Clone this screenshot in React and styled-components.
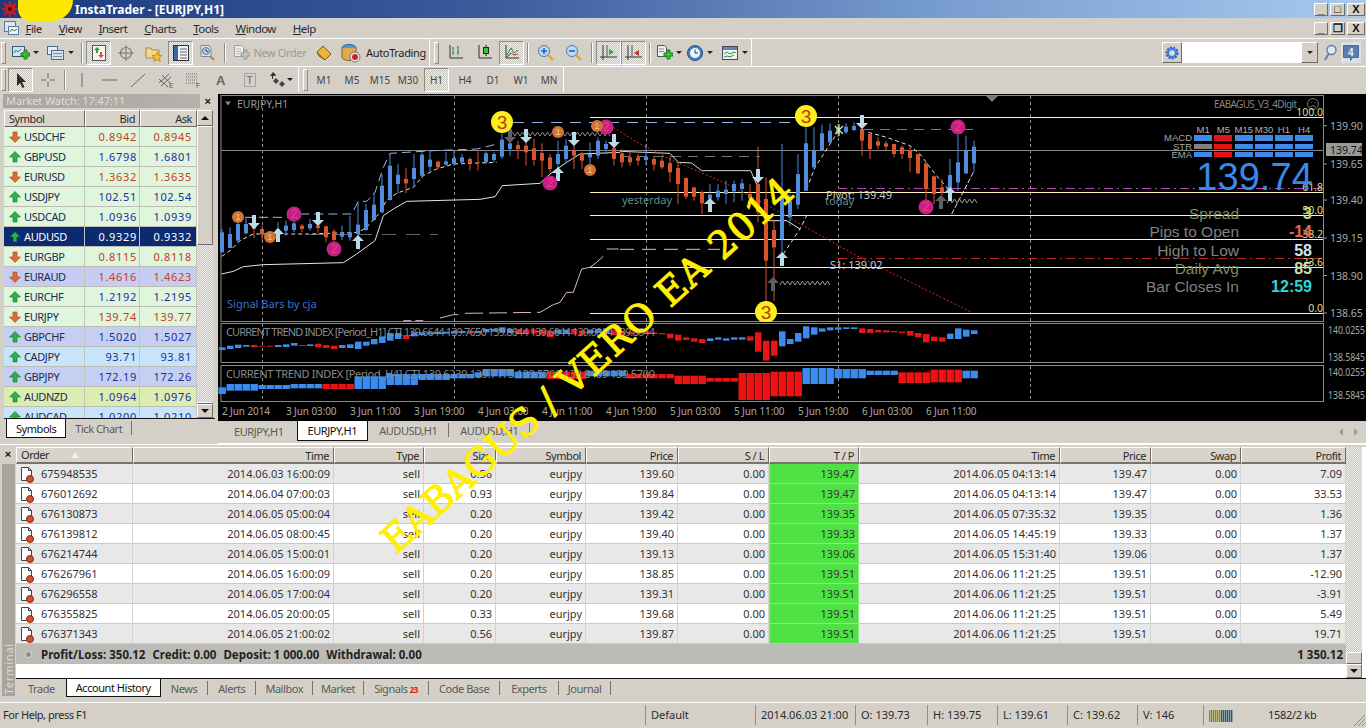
import React from 'react';
import styled, { createGlobalStyle, css } from 'styled-components';

const FACE = '#d4d0c8';
const UI_FONT = '"Noto Sans", "Liberation Sans", sans-serif';

const GlobalStyle = createGlobalStyle`
  html, body {
    margin: 0;
    padding: 0;
    background: ${FACE};
    overflow: hidden;
  }
`;

const dither = css`
  background: repeating-conic-gradient(#f4f2ee 0 25%, #c4c1b9 0 50%) 0 0 / 2px 2px;
`;

const raised = css`
  background: ${FACE};
  border: 1px solid;
  border-color: #fff #6e6b64 #6e6b64 #fff;
  box-sizing: border-box;
`;

// the original's labels are set in a narrower face than Noto
const tight = css`
  letter-spacing: -0.45px;
`;

const Page = styled.div`
  position: relative;
  width: 1366px;
  height: 728px;
  overflow: hidden;
  background: ${FACE};
  font-family: ${UI_FONT};
  font-size: 11px;
  color: #2a2a2a;
  display: flex;
  flex-direction: column;
`;

/* title + menu */
const TitleBar = styled.div`
  height: 18px;
  flex: none;
  display: flex;
  align-items: center;
  padding-left: 2px;
  background: linear-gradient(90deg, #1d3a80 0%, #3a5a9c 35%, #7a9fd0 70%, #a6caf0 100%);
`;

const TitleText = styled.span`
  margin-left: 57px;
  color: #fff;
  font-size: 12px;
  font-weight: 700;
`;

const Scribble = styled.div`
  position: absolute;
  left: 18px;
  top: 0;
  width: 55px;
  height: 21px;
  background: #ffe800;
  border-radius: 0 0 24px 14px;
  z-index: 3;
`;

const CaptionGroup = styled.div`
  margin-left: auto;
  display: flex;
  gap: 2px;
  padding-right: 1px;
`;

const CaptionBtn = styled.div`
  ${raised}
  width: ${(p) => p.$w || 14}px;
  height: 13px;
  display: flex;
  align-items: center;
  justify-content: center;
  font-family: "Liberation Sans", sans-serif;
  font-size: 11px;
  font-weight: 700;
  line-height: 1;
  color: #111;
`;

const MenuBar = styled.div`
  height: 20px;
  flex: none;
  display: flex;
  align-items: center;
  padding-left: 3px;
`;

const MenuItem = styled.span`
  padding: 0 8.5px;
  font-size: 11.5px;
  letter-spacing: -0.55px;
  &:first-of-type {
    margin-left: -2px;
  }
  u {
    text-underline-offset: 1px;
  }
`;

/* toolbars */
const ToolbarRow = styled.div`
  height: ${(p) => p.$h}px;
  flex: none;
  box-sizing: border-box;
  display: flex;
  align-items: center;
  border-top: 1px solid #fff;
  padding-left: 1px;
`;

const ToolGroup = styled.div`
  height: 100%;
  display: flex;
  align-items: center;
  border-right: 1px solid ${(p) => (p.$white ? '#fff' : '#8f8c85')};
  margin-right: 4px;
`;

const Gripper = styled.div`
  width: 3px;
  height: 20px;
  margin-right: 2px;
  border: 1px solid;
  border-color: #fff #8f8c85 #8f8c85 #fff;
`;

const ToolSep = styled.div`
  width: 1px;
  height: 20px;
  margin: 0 ${(p) => p.$m || 3}px;
  background: #8f8c85;
  border-right: 1px solid #fff;
`;

const ToolBtn = styled.div`
  width: ${(p) => p.$w}px;
  height: 24px;
  flex: none;
  box-sizing: border-box;
  display: flex;
  align-items: center;
  justify-content: center;
  gap: ${(p) => p.$gap || 3}px;
  ${(p) =>
    p.$on &&
    css`
      border: 1px solid;
      border-color: #8f8c85 #fff #fff #8f8c85;
      ${dither}
    `}
`;

const ToolLabel = styled.span`
  font-size: 11px;
  letter-spacing: -0.35px;
  color: ${(p) => (p.$off ? '#9c9a94' : '#222')};
`;

const PeriodBtn = styled(ToolBtn)`
  font-size: 10px;
  color: #444;
  width: 28px;
  ${(p) =>
    p.$on &&
    css`
      width: 25px;
      margin: 0 2px;
    `}
`;

const Caret = styled.span`
  width: 0;
  height: 0;
  border: 3px solid transparent;
  border-top: 3px solid #222;
  border-bottom: 0;
`;

const SearchArea = styled.div`
  margin-left: auto;
  padding-right: 4px;
  display: flex;
  align-items: center;
  height: 22px;
`;

const SearchGear = styled.div`
  ${raised}
  width: 20px;
  height: 21px;
  display: flex;
  align-items: center;
  justify-content: center;
`;

const SearchInput = styled.div`
  width: 119px;
  height: 21px;
  background: #fff;
`;

const SearchDrop = styled.div`
  ${raised}
  width: 17px;
  height: 21px;
  display: flex;
  align-items: center;
  justify-content: center;
  margin-right: 2px;
`;

const SearchBtn = styled.div`
  width: 20px;
  height: 21px;
  display: flex;
  align-items: center;
  justify-content: center;
  background: ${(p) => (p.$msg ? '#dfe0e4' : FACE)};
  margin-right: 1px;
`;

/* main area */
const MainRow = styled.div`
  height: 352px;
  flex: none;
  display: flex;
`;

const MarketWatch = styled.aside`
  width: 218px;
  flex: none;
  box-sizing: border-box;
  padding: 2px 0 0 3px;
  display: flex;
  flex-direction: column;
`;

const DockHead = styled.div`
  height: 14px;
  flex: none;
  display: flex;
  align-items: center;
  justify-content: space-between;
  margin-right: 3px;
`;

const DockTitle = styled.div`
  width: 197px;
  height: 14px;
  line-height: 14px;
  padding-left: 3px;
  box-sizing: border-box;
  font-size: 11px;
  letter-spacing: -0.1px;
  color: #e0ded8;
  background: linear-gradient(90deg, #a8a59e, #b5b2ab);
`;

const CloseMark = styled.span`
  font-family: "Liberation Sans", sans-serif;
  font-size: 11px;
  font-weight: 700;
  color: #111;
  padding-right: 4px;
`;

const WatchBody = styled.div`
  display: flex;
  margin: 2px 3px 0 1px;
  height: 308px;
  overflow: hidden;
  border-bottom: 1px solid #111;
`;

const WatchTable = styled.div`
  width: 193px;
  flex: none;
`;

const WatchRow = styled.div`
  display: grid;
  grid-template-columns: 81px 55px 57px;
  height: 20px;
  box-sizing: border-box;
  border-bottom: 1px solid #bdbdb6;
  background: ${(p) => p.$bg};
  color: ${(p) => (p.$sel ? '#fff' : '#1e2a50')};
`;

const WatchHead = styled.div`
  display: grid;
  grid-template-columns: 81px 55px 57px;
  height: 17px;
`;

const HeadCell = styled.div`
  ${raised}
  ${tight}
  background: #d8d4cc;
  padding: 0 4px;
  line-height: 15px;
  font-size: 11px;
  text-align: ${(p) => (p.$right ? 'right' : 'left')};
  white-space: nowrap;
  overflow: hidden;
`;

const SymbolCell = styled.div`
  display: flex;
  align-items: center;
  gap: 3px;
  padding-left: 5px;
  border-right: 1px solid #c4c4bc;
  font-size: 11px;
  letter-spacing: -0.4px;
`;

const QuoteCell = styled.div`
  line-height: 19px;
  padding-right: ${(p) => p.$pad}px;
  text-align: right;
  letter-spacing: 0.7px;
  border-right: 1px solid #c4c4bc;
  color: ${(p) => (p.$sel ? '#fff' : p.$down ? '#c2401f' : '#1c2f98')};
`;

const ScrollTrack = styled.div`
  width: 16px;
  flex: none;
  display: flex;
  flex-direction: column;
  ${dither}
`;

const ScrollBtn = styled.div`
  ${raised}
  height: ${(p) => p.$h || 16}px;
  flex: none;
  display: flex;
  align-items: center;
  justify-content: center;
`;

const Thumb = styled.div`
  ${raised}
  height: ${(p) => p.$h}px;
  flex: none;
  ${(p) =>
    p.$push &&
    css`
      margin-top: auto;
    `}
`;

const TriUp = styled.span`
  width: 0;
  height: 0;
  border: 4px solid transparent;
  border-bottom: 4px solid #111;
  border-top: 0;
`;

const TriDown = styled.span`
  width: 0;
  height: 0;
  border: 4px solid transparent;
  border-top: 4px solid #111;
  border-bottom: 0;
`;

const TabStrip = styled.div`
  display: flex;
  align-items: flex-start;
  flex: none;
  height: ${(p) => p.$h || 19}px;
  padding-left: ${(p) => p.$pad || 3}px;
`;

const Tab = styled.div`
  ${tight}
  height: 100%;
  box-sizing: border-box;
  padding: 0 ${(p) => p.$px || 10}px;
  display: flex;
  align-items: center;
  gap: 2px;
  white-space: nowrap;
  font-size: 11px;
  color: #5c5a55;
  border-right: 1px solid #77746d;
  ${(p) =>
    p.$plain &&
    css`
      border-right: 0;
    `}
  ${(p) =>
    p.$active &&
    css`
      background: #fff;
      color: #111;
      border: 1px solid #111;
      border-top: 0;
    `}
  ${(p) =>
    p.$thin &&
    css`
      height: 14px;
      margin-top: 2px;
    `}
`;

const TabBadge = styled.span`
  color: #e81818;
  font-size: 8px;
  font-weight: 700;
  align-self: flex-end;
  margin-bottom: 0;
`;

/* chart column */
const ChartColumn = styled.section`
  flex: 1;
  min-width: 0;
  padding-top: 2px;
  display: flex;
  flex-direction: column;
`;

const ChartWindow = styled.div`
  background: #000;
  height: 327px;
  flex: none;
  display: flex;
  flex-direction: column;
`;

const Pane = styled.div`
  position: relative;
  height: ${(p) => p.$h}px;
  flex: none;
  svg {
    display: block;
  }
`;

const TimeAxis = styled.div`
  display: flex;
  height: 18px;
  padding-left: 4px;
`;

const TimeLabel = styled.span`
  width: 64px;
  flex: none;
  font-size: 10px;
  letter-spacing: -0.1px;
  line-height: 17px;
  white-space: nowrap;
  color: #a8a8a8;
`;

const ChartTabs = styled.div`
  height: 22px;
  flex: none;
  display: flex;
  align-items: flex-start;
  position: relative;
  border-bottom: 1px solid #fff;
`;

const TabArrows = styled.div`
  margin-left: auto;
  margin-right: 8px;
  display: flex;
  gap: 11px;
  height: 100%;
  align-items: center;
`;

const TinyTri = styled.span`
  width: 0;
  height: 0;
  border: 4px solid transparent;
  ${(p) => (p.$left ? 'border-right: 4px solid #a3a09a; border-left: 0;' : 'border-left: 4px solid #a3a09a; border-right: 0;')}
`;

/* info panel over the chart */
const InfoPanel = styled.div`
  position: absolute;
  left: 920px;
  top: 32px;
  width: 175px;
  font-family: "Liberation Sans", sans-serif;
`;

const SignalGrid = styled.div`
  display: grid;
  grid-template-columns: 54px repeat(6, 18px);
  column-gap: 2.2px;
  grid-auto-rows: 8.3px;
  font-size: 9.5px;
  line-height: 8px;
  color: #b0b0b0;
  text-align: center;
`;

const SignalName = styled.div`
  text-align: right;
  color: #a8a8a8;
`;

const SignalCell = styled.div`
  height: 5.5px;
  margin-top: 1px;
  background: ${(p) => p.$c};
`;

const BigPrice = styled.div`
  font-size: 38px;
  line-height: 42px;
  margin-top: -3px;
  text-align: right;
  color: #3a88e8;
  letter-spacing: 0.1px;
`;

const Stats = styled.div`
  display: grid;
  grid-template-columns: 101px 74px;
  grid-auto-rows: 18.2px;
  margin-top: 7px;
  font-size: 15.5px;
  line-height: 18px;
  text-align: right;
`;

const StatLabel = styled.div`
  color: ${(p) => p.$c || '#808080'};
  white-space: nowrap;
`;

const StatValue = styled.div`
  font-weight: 700;
  font-size: 16px;
  color: ${(p) => p.$c};
  padding-right: 1px;
`;

/* terminal */
const Terminal = styled.section`
  height: 257px;
  flex: none;
  box-sizing: border-box;
  padding-top: 2px;
  display: flex;
  border-top: 1px solid #fff;
`;

const TerminalSide = styled.div`
  width: 16px;
  flex: none;
  display: flex;
  flex-direction: column;
  align-items: center;
`;

const SideClose = styled(CloseMark)`
  padding: 0;
  line-height: 15px;
`;

const SideBar = styled.div`
  flex: 1;
  width: 13px;
  margin: 2px 0 5px;
  background: #a8a59e;
  display: flex;
  align-items: flex-end;
  justify-content: center;
`;

const SideLabel = styled.span`
  writing-mode: vertical-rl;
  transform: rotate(180deg);
  font-size: 11px;
  letter-spacing: 0.8px;
  color: #dcd9d2;
  padding-top: 2px;
`;

const TerminalMain = styled.div`
  flex: 1;
  min-width: 0;
  display: flex;
  flex-direction: column;
`;

const TradeArea = styled.div`
  height: 231px;
  flex: none;
  display: flex;
  background: #fff;
  border-bottom: 1px solid #111;
`;

const TradeTable = styled.div`
  width: 1330px;
  flex: none;
`;

const COLUMNS = '117px 201px 90px 72px 90px 92px 91px 90px 201px 91px 90px 105px';

const TradeHead = styled.div`
  display: grid;
  grid-template-columns: ${COLUMNS};
  height: 17px;
`;

const TradeHeadCell = styled(HeadCell)`
  border-bottom: 2px solid #77746d;
  line-height: 16px;
  ${(p) =>
    p.$sort &&
    css`
      display: flex;
      gap: 22px;
      align-items: center;
    `}
`;

const SortMark = styled.span`
  width: 0;
  height: 0;
  border: 4px solid transparent;
  border-bottom: 6px solid #f2f0ea;
  border-top: 0;
`;

const TradeRow = styled.div`
  display: grid;
  grid-template-columns: ${COLUMNS};
  height: 20px;
  box-sizing: border-box;
  background: ${(p) => (p.$odd ? '#e8e8e8' : '#fff')};
  border-bottom: 1px solid #c9c9c9;
`;

const TradeCell = styled.div`
  line-height: 20px;
  padding-right: 3px;
  text-align: right;
  color: #333;
  border-right: 1px solid #d2d2d2;
  ${(p) =>
    p.$tp &&
    css`
      background: #4fe244;
      border: 1px solid #8ee888;
      border-top: 0;
      line-height: 19px;
    `}
`;

const OrderCell = styled.div`
  display: flex;
  align-items: center;
  gap: 5px;
  padding-left: 3px;
  line-height: 20px;
  color: #333;
  border-right: 1px solid #d2d2d2;
`;

const TotalRow = styled.div`
  height: 20px;
  display: flex;
  align-items: center;
  padding: 0 3px 0 9px;
  background: #bdbbb6;
  font-size: 11.5px;
  font-weight: 700;
  color: #222;
`;

const TotalDot = styled.span`
  width: 5px;
  height: 5px;
  border-radius: 50%;
  background: #8c8a85;
  border: 1px solid #e4e2dc;
  margin-right: 9px;
`;

const TotalSum = styled.span`
  margin-left: auto;
`;

const TotalPart = styled.span`
  margin-right: 7px;
`;

/* status bar */
const StatusBar = styled.footer`
  height: 25px;
  flex: none;
  box-sizing: border-box;
  border-top: 1px solid #fff;
  display: flex;
  align-items: center;
  position: relative;
  margin-top: 1px;
`;

const StatusCell = styled.div`
  width: ${(p) => p.$w}px;
  flex: none;
  box-sizing: border-box;
  height: 20px;
  line-height: 20px;
  padding-left: ${(p) => p.$pad || 5}px;
  white-space: nowrap;
  border-right: 1px solid #8f8c85;
  ${(p) =>
    p.$hint &&
    css`
      padding-left: 3px;
      ${tight}
    `}
  ${(p) =>
    p.$last &&
    css`
      border-right: 0;
    `}
`;

const ConnBars = styled.svg`
  vertical-align: middle;
`;

const TrafficLabel = styled.span`
  margin-left: 35px;
  letter-spacing: -0.3px;
`;

const Grip = styled.svg`
  position: absolute;
  right: 0;
  bottom: 0;
`;

/* watermark written across the screenshot */
const Watermark = styled.div`
  position: absolute;
  left: 588px;
  top: 365px;
  transform: translate(-50%, -50%) rotate(-42deg);
  font-family: "DejaVu Serif", "Liberation Serif", serif;
  font-size: 38px;
  line-height: 1;
  letter-spacing: 1px;
  white-space: pre;
  color: #ffef00;
  -webkit-text-stroke: 1px #ffef00;
  z-index: 4;
  pointer-events: none;
`;

const WatermarkWord = styled.span`
  letter-spacing: -0.3px;
`;

/* ---- data ---- */

const WATCH = [
  ['USDCHF', '0.8942', '0.8945', 1, '#dff5dc'],
  ['GBPUSD', '1.6798', '1.6801', 0, '#dff5dc'],
  ['EURUSD', '1.3632', '1.3635', 1, '#dff5dc'],
  ['USDJPY', '102.51', '102.54', 0, '#dff5dc'],
  ['USDCAD', '1.0936', '1.0939', 0, '#dff5dc'],
  ['AUDUSD', '0.9329', '0.9332', 0, '#0c2a70', true],
  ['EURGBP', '0.8115', '0.8118', 1, '#dff5dc'],
  ['EURAUD', '1.4616', '1.4623', 1, '#c5cdf2'],
  ['EURCHF', '1.2192', '1.2195', 0, '#dff5dc'],
  ['EURJPY', '139.74', '139.77', 1, '#dff5dc'],
  ['GBPCHF', '1.5020', '1.5027', 0, '#c5cff2'],
  ['CADJPY', '93.71', '93.81', 0, '#c8e4fb'],
  ['GBPJPY', '172.19', '172.26', 0, '#c5cff2'],
  ['AUDNZD', '1.0964', '1.0976', 0, '#dcedb2'],
  ['AUDCAD', '1.0200', '1.0210', 0, '#c8e4fb'],
];

const TRADES = [
  ['675948535', '2014.06.03 16:00:09', '0.56', '139.60', '139.47', '2014.06.05 04:13:14', '7.09'],
  ['676012692', '2014.06.04 07:00:03', '0.93', '139.84', '139.47', '2014.06.05 04:13:14', '33.53'],
  ['676130873', '2014.06.05 05:00:04', '0.20', '139.42', '139.35', '2014.06.05 07:35:32', '1.36'],
  ['676139812', '2014.06.05 08:00:45', '0.20', '139.40', '139.33', '2014.06.05 14:45:19', '1.37'],
  ['676214744', '2014.06.05 15:00:01', '0.20', '139.13', '139.06', '2014.06.05 15:31:40', '1.37'],
  ['676267961', '2014.06.05 16:00:09', '0.20', '138.85', '139.51', '2014.06.06 11:21:25', '-12.90'],
  ['676296558', '2014.06.05 17:00:04', '0.20', '139.31', '139.51', '2014.06.06 11:21:25', '-3.91'],
  ['676355825', '2014.06.05 20:00:05', '0.33', '139.68', '139.51', '2014.06.06 11:21:25', '5.49'],
  ['676371343', '2014.06.05 21:00:02', '0.56', '139.87', '139.51', '2014.06.06 11:21:25', '19.71'],
];

const TIMES = [
  '2 Jun 2014', '3 Jun 03:00', '3 Jun 11:00', '3 Jun 19:00', '4 Jun 03:00', '4 Jun 11:00',
  '4 Jun 19:00', '5 Jun 03:00', '5 Jun 11:00', '5 Jun 19:00', '6 Jun 03:00', '6 Jun 11:00',
];

// high, body top, body bottom, low, colour - read off the picture at 3x
const CANDLES = [
  [405,415,475,475,'b'],[400,420,462,462,'b'],[375,390,440,445,'b'],[370,390,418,420,'b'],[375,395,405,432,'r'],
  [395,405,420,440,'r'],[420,422,435,445,'r'],[385,405,432,440,'b'],[380,395,410,425,'b'],[370,388,408,415,'b'],
  [390,395,405,415,'r'],[375,390,403,410,'b'],[380,395,402,418,'r'],[395,397,430,445,'r'],[405,412,438,450,'r'],
  [395,417,428,438,'b'],[365,415,430,440,'b'],[322,392,420,440,'b'],[330,348,408,410,'b'],[295,332,378,380,'b'],
  [240,275,355,358,'b'],[178,215,318,320,'b'],[210,242,270,298,'b'],[222,255,268,298,'r'],[180,222,255,280,'b'],
  [175,182,245,252,'b'],[168,197,218,232,'b'],[200,203,220,225,'r'],[175,202,212,215,'b'],[170,192,210,215,'b'],
  [180,190,205,210,'b'],[190,195,208,230,'r'],[172,205,207,230,'r'],[172,178,205,210,'b'],[175,180,198,205,'b'],
  [118,137,188,195,'b'],[118,148,165,185,'b'],[140,153,165,195,'r'],[135,155,175,215,'r'],[135,163,198,215,'r'],
  [148,177,200,250,'r'],[180,190,225,235,'r'],[140,180,210,235,'b'],[135,155,195,210,'b'],[150,170,185,225,'r'],
  [175,177,200,225,'r'],[145,180,190,215,'b'],[130,140,185,195,'b'],[140,150,165,180,'b'],[150,163,195,215,'r'],
  [165,178,205,220,'r'],[175,190,205,215,'r'],[180,190,200,215,'r'],[150,188,198,215,'b'],[185,195,212,230,'r'],
  [190,200,220,225,'r'],[185,207,235,265,'r'],[205,222,270,330,'r'],[250,252,308,315,'r'],[280,280,308,320,'r'],
  [290,295,328,360,'r'],[270,302,314,345,'b'],[270,290,310,320,'b'],[260,287,300,330,'b'],[260,270,292,325,'b'],
  [255,268,285,320,'b'],[270,300,312,340,'r'],[158,270,355,385,'r'],[250,315,500,620,'r'],[380,408,460,620,'r'],
  [150,305,435,480,'b'],[300,320,370,395,'b'],[180,240,332,345,'b'],[100,148,290,290,'b'],[100,170,220,225,'b'],
  [92,118,168,170,'b'],[88,110,145,150,'b'],[90,100,120,130,'b'],[88,98,115,120,'b'],[85,96,108,112,'b'],
  [100,105,140,185,'r'],[120,120,165,195,'r'],[130,142,155,165,'r'],[140,148,158,168,'r'],[150,150,180,190,'r'],
  [155,160,180,195,'r'],[155,168,192,235,'r'],[180,180,238,240,'r'],[205,208,285,320,'r'],[245,247,300,330,'r'],
  [255,280,295,305,'r'],[195,243,285,295,'b'],[100,205,265,290,'b'],[125,170,238,240,'b'],[140,158,208,235,'b'],
];

const CTI_H1 = [
  [85,93,'b'],[80,90,'b'],[77,87,'b'],[78,83,'b'],[78,85,'r'],[80,83,'r'],[80,83,'r'],[78,84,'b'],[76,84,'b'],[72,80,'b'],
  [78,81,'r'],[76,81,'b'],[74,85,'r'],[78,87,'r'],[80,90,'r'],[78,87,'b'],[76,87,'b'],[68,90,'b'],[68,80,'b'],[60,76,'b'],
  [52,72,'b'],[42,65,'b'],[42,60,'b'],[48,60,'r'],[40,52,'b'],[40,48,'b'],[40,46,'b'],[38,44,'b'],[38,44,'b'],[36,44,'b'],
  [36,42,'b'],[36,44,'r'],[36,42,'b'],[30,40,'b'],[30,38,'b'],[25,40,'b'],[30,42,'b'],[30,44,'r'],[32,44,'r'],[32,44,'r'],
  [32,48,'r'],[35,55,'r'],[32,44,'b'],[32,44,'b'],[30,46,'r'],[35,48,'r'],[32,44,'b'],[30,42,'b'],[28,44,'b'],[32,48,'r'],
  [36,48,'r'],[38,46,'r'],[38,44,'r'],[38,44,'r'],[40,45,'r'],[42,46,'r'],[44,58,'r'],[47,65,'r'],[55,63,'r'],[58,68,'r'],
  [60,72,'r'],[58,66,'b'],[55,62,'b'],[58,65,'b'],[55,62,'b'],[55,62,'b'],[52,65,'r'],[40,98,'r'],[65,125,'r'],[65,110,'r'],
  [37,82,'b'],[60,75,'b'],[42,68,'b'],[22,58,'b'],[25,47,'b'],[28,38,'b'],[25,34,'b'],[25,32,'b'],[25,30,'b'],[25,30,'b'],
  [28,42,'r'],[30,42,'r'],[33,40,'r'],[34,40,'r'],[36,40,'r'],[38,42,'r'],[36,50,'r'],[42,55,'r'],[45,70,'r'],[53,66,'r'],
  [55,68,'r'],[44,60,'b'],[28,60,'b'],[32,53,'b'],[34,45,'b'],
];

// from, to, top, bottom, colour
const CTI_H4 = [
  [0,0,205,225,'b'],[1,4,195,215,'b'],[5,8,198,210,'b'],[9,12,195,208,'b'],[13,16,195,210,'r'],[17,20,172,210,'b'],
  [21,24,165,198,'b'],[25,28,165,183,'b'],[29,31,165,178,'b'],[32,32,160,175,'b'],[33,36,150,172,'b'],[37,40,158,178,'b'],
  [41,45,158,180,'r'],[46,50,155,172,'b'],[51,56,165,178,'r'],[57,60,170,195,'r'],[61,64,177,188,'r'],[65,68,162,243,'r'],
  [69,72,158,232,'r'],[73,76,147,195,'b'],[77,80,150,178,'b'],[81,84,155,168,'b'],[85,88,160,192,'r'],[89,92,152,190,'r'],
  [93,94,155,178,'b'],
];

const BLUE = '#4f8cdc';
const RED = '#d9552c';
const HIST = { b: '#3a8cf0', r: '#ee1212' };

const cx = (i) => 222 + 8 * i;
const zy = (z) => 95 + z / 3;
const subY = (z) => 320 + z / 3;

// polylines noted in crop coordinates, ox is the crop's left edge
const pts = (ox, list) => list.map(([x, y]) => `${ox + x / 3},${zy(y)}`).join(' ');

const FIBO = [118.5, 193.5, 216.5, 240.5, 268.5, 314.5];
const FIBO_LABELS = [['100.0', 113], ['61.8', 188], ['50.0', 211], ['38.2', 235], ['23.6', 263], ['0.0', 309]];
const GRID_X = [262, 454, 646, 838, 1030];
const PRICES = [['139.90', 126.7], ['139.65', 165], ['139.40', 201], ['139.15', 239], ['138.90', 276.5], ['138.65', 314]];

const ARROWS = [
  [254, 223, 1], [318, 220, 1], [526, 137, 1], [574, 140, 1], [614, 142, 1], [510, 137, 1, 1],
  [758, 177, 1], [862, 123, 1],
  [278, 236, 0], [358, 243, 0], [558, 175, 0], [710, 206, 0], [782, 260, 0], [950, 195, 0],
  [773, 285, 0, 1], [941, 203, 0, 1],
];

const BADGES = [
  [502, 123, 3], [806, 117, 3], [766, 313, 3],
  [294, 215, 2], [334, 250, 2], [550, 184, 2], [606, 128, 2], [958, 128, 2], [926, 208, 2],
  [238, 218, 1], [270, 238, 1], [558, 133, 1], [590, 171, 1], [597, 127, 1],
];

const zigzag = (x, y, n) => {
  let d = `M${x} ${y}`;
  for (let i = 0; i < n; i++) d += ` l2.5 -4 l2.5 4`;
  return d;
};

const Arrow = ({ x, y, down, dim }) => {
  const s = down ? -1 : 1;
  const d = `M${x} ${y - 7 * s} L${x + 6} ${y - s} L${x + 2} ${y - s} L${x + 2} ${y + 7 * s} L${x - 2} ${y + 7 * s} L${x - 2} ${y - s} L${x - 6} ${y - s} Z`;
  return <path d={d} fill={dim ? '#5c6060' : '#b9dce8'} />;
};

const Badge = ({ x, y, n }) => {
  const look = {
    3: { r: 11, fill: '#ffee1e', ink: '#b2400f', size: 19 },
    2: { r: 7.5, fill: '#c4208c', ink: '#f0406a', size: 12 },
    1: { r: 6, fill: '#cf7436', ink: '#f3c59a', size: 9 },
  }[n];
  return (
    <g>
      <circle cx={x} cy={y} r={look.r} fill={look.fill} />
      <text x={x} y={y + look.size * 0.36} textAnchor="middle" fontSize={look.size} fontFamily="Liberation Sans, sans-serif" fill={look.ink}>
        {n}
      </text>
    </g>
  );
};

const FONT = 'Noto Sans, sans-serif';

const MainChart = () => (
  <svg width="1148" height="228" viewBox="218 95 1148 228">
    <rect x="221" y="96.5" width="1102.5" height="226" fill="none" stroke="#8a8a8a" />
    {GRID_X.map((x) => (
      <line key={x} x1={x + 0.5} x2={x + 0.5} y1="97" y2="322" stroke="#8f8f8f" strokeDasharray="3 3" />
    ))}
    <line x1="221" x2="1323" y1="151.5" y2="151.5" stroke="#8a8a8a" />
    {FIBO.map((y) => (
      <line key={y} x1="590" x2="1323" y1={y} y2={y} stroke="#fff3b4" />
    ))}
    <line x1="838" x2="1323" y1="189.5" y2="189.5" stroke="#c23cc2" strokeDasharray="9 4 2 4" />
    <line x1="838" x2="1323" y1="259.5" y2="259.5" stroke="#c42424" strokeDasharray="9 4 2 4" />
    <line x1="513" x2="793" y1="123.5" y2="123.5" stroke="#8fb4e0" strokeDasharray="11 8" />
    <line x1="863" x2="973" y1="130.5" y2="130.5" stroke="#777" strokeDasharray="10 7" />
    <line x1="620" x2="760" y1="157.5" y2="157.5" stroke="#777" strokeDasharray="10 7" />
    <line x1="310" x2="438" y1="235.5" y2="235.5" stroke="#666" strokeDasharray="14 10" />

    <polyline
      fill="none"
      stroke="#e4e4e4"
      points={pts(220, [[5,540],[40,532],[70,518],[130,512],[370,506],[410,480],[465,440],[490,365],[520,345],[560,322],[780,316],[825,308],[847,275],[960,268],[990,240],[1040,205],[1080,180],[1200,175]])}
    />
    <polyline
      fill="none"
      stroke="#d8d8d8"
      points={pts(620, [[0,172],[150,178],[175,205],[215,207],[245,230],[392,230],[412,275]])}
    />
    <polyline
      fill="none"
      stroke="#9db8dd"
      strokeDasharray="9 5"
      points={pts(220, [[75,370],[125,370],[148,370],[215,370],[240,360],[395,360],[415,322],[440,322],[465,295],[490,220],[510,178],[640,170],[770,165],[800,158],[830,150]])}
    />
    <polyline
      fill="none"
      stroke="#e0e0e0"
      strokeDasharray="4 3"
      points={pts(220, [[5,487],[30,470],[60,440],[100,420],[200,420],[270,420],[415,415],[440,400],[480,355],[500,318],[530,298],[580,280],[610,245],[650,225],[700,210],[830,205]])}
    />
    <polyline fill="none" stroke="#e0e0e0" strokeDasharray="4 3" points={pts(620, [[745,115],[800,130],[870,155],[900,180],[945,240],[985,285]])} />
    <polyline fill="none" stroke="#e0e0e0" strokeDasharray="4 3" points={pts(620, [[560,285],[585,220],[640,135],[655,110]])} />
    <polyline fill="none" stroke="#e0e0e0" strokeDasharray="4 3" points={pts(620, [[490,480],[540,405],[560,365]])} />
    <polyline fill="none" stroke="#e0e0e0" points={pts(620, [[440,380],[500,380],[540,405]])} />
    <polyline fill="none" stroke="#e0e0e0" strokeDasharray="5 2" points={pts(620, [[995,360],[1060,235]])} />
    <polyline fill="none" stroke="#d8b8d0" points={pts(220, [[550,680],[610,680]])} strokeDasharray="8 4" />
    <polyline fill="none" stroke="#d8b8d0" points={pts(220, [[660,672],[700,662],[715,662]])} />
    <polyline fill="none" stroke="#d8b8d0" strokeDasharray="18 6" points={pts(220, [[735,658],[960,655]])} />
    <polyline fill="none" stroke="#d8b8d0" points={pts(220, [[960,655],[1000,632],[1020,625],[1040,595],[1060,595],[1085,525],[1110,520],[1130,505],[1150,487]])} />
    <polyline fill="none" stroke="#d8b8d0" strokeDasharray="12 6" points={pts(220, [[1160,465],[1200,465]])} />
    <polyline fill="none" stroke="#d8b8d0" strokeDasharray="14 8" points={pts(620, [[0,466],[300,466]])} />
    <polyline fill="none" stroke="#d03020" strokeDasharray="2 2" points={pts(620, [[-20,100],[60,150],[160,200],[300,260],[400,310],[700,480],[1055,655]])} />

    {CANDLES.map(([hi, top, bot, lo, c], i) => (
      <g key={i} fill={c === 'b' ? BLUE : RED}>
        <rect x={cx(i) - 0.5} y={zy(hi)} width="1" height={(lo - hi) / 3} />
        <rect x={cx(i) - 2} y={zy(top)} width="4" height={(bot - top) / 3} />
      </g>
    ))}

    <path d={zigzag(510, 137, 20)} fill="none" stroke="#8a8a8a" />
    <path d={zigzag(780, 286, 10)} fill="none" stroke="#9a9a9a" />
    <path d={zigzag(947, 204, 6)} fill="none" stroke="#9a9a9a" />
    <path d="M835 127l8 8M843 127l-8 8M839 125v12" stroke="#d8e8a0" strokeWidth="1.2" />

    {ARROWS.map(([x, y, down, dim], i) => (
      <Arrow key={i} x={x} y={y} down={down} dim={dim} />
    ))}
    {BADGES.map(([x, y, n], i) => (
      <Badge key={i} x={x} y={y} n={n} />
    ))}

    <path d="M225 102.5h6l-3 4z" fill="#8a8a8a" />
    <text x="237" y="108.5" fontFamily={FONT} fontSize="10.5" fill="#999">EURJPY,H1</text>
    <text x="227" y="309" fontFamily={FONT} fontSize="11" fill="#3f6fd4">Signal Bars by cja</text>
    <text x="622" y="205" fontFamily={FONT} fontSize="11" fill="#5f8f8f">yesterday</text>
    <text x="825" y="206" fontFamily={FONT} fontSize="11" fill="#5f8f8f">today</text>
    <text x="826" y="200" fontFamily={FONT} fontSize="11" fill="#c8c8c8">Pivot: 139.49</text>
    <text x="830" y="270" fontFamily={FONT} fontSize="11" fill="#c8c8c8">S1: 139.02</text>
    <path d="M986 97h12l-6 6z" fill="#777" />
    <text x="1214" y="109" fontFamily={FONT} fontSize="10" fill="#858585" textLength="83">EABAGUS_V3_4Digit</text>
    <circle cx="1313" cy="105" r="5.5" fill="none" stroke="#777" />
    <path d="M1310.5 103.5h1M1314.5 103.5h1M1310 108q3 -3 6 0" stroke="#777" fill="none" />
    {FIBO_LABELS.map(([t, y]) => (
      <text key={t} x="1323" y={y + 4} textAnchor="end" fontFamily={FONT} fontSize="10.5" fill="#dede90">{t}</text>
    ))}
    {PRICES.map(([t, y]) => (
      <g key={t}>
        <line x1="1324" x2="1327" y1={y} y2={y} stroke="#999" />
        <text x="1330" y={y + 4} fontFamily={FONT} fontSize="10.5" fill="#a8a8a8">{t}</text>
      </g>
    ))}
    <rect x="1326" y="144" width="36" height="13" fill="#9a9a9a" />
    <text x="1330" y="154.5" fontFamily={FONT} fontSize="10.5" fill="#111">139.74</text>
  </svg>
);

const SubChart = ({ height, top, title, titleWidth, children, high, low }) => (
  <svg width="1148" height={height} viewBox={`218 ${top} 1148 ${height}`}>
    <rect x="221" y={top + 1.5} width="1102.5" height={height - 3} fill="none" stroke="#8a8a8a" />
    {GRID_X.map((x) => (
      <line key={x} x1={x + 0.5} x2={x + 0.5} y1={top + 2} y2={top + height - 2} stroke="#8f8f8f" strokeDasharray="3 3" />
    ))}
    {children}
    <text x="226" y={top + 14} fontFamily={FONT} fontSize="11" fill="#8a8a8a" textLength={titleWidth}>{title}</text>
    <text x="1328" y={high} fontFamily={FONT} fontSize="10.5" fill="#a8a8a8" textLength="37" lengthAdjust="spacingAndGlyphs">140.0255</text>
    <text x="1328" y={low} fontFamily={FONT} fontSize="10.5" fill="#a8a8a8" textLength="37" lengthAdjust="spacingAndGlyphs">138.5845</text>
  </svg>
);

/* ---- icons ---- */
const Ico = ({ children, w = 18, h = 18 }) => (
  <svg width={w} height={h} viewBox={`0 0 ${w} ${h}`}>{children}</svg>
);

const PLUS = 'M9 9h3V6h3v3h3v3h-3v3h-3v-3H9z';

const IcNewChart = () => (
  <Ico>
    <rect x="0.5" y="2.5" width="12" height="10" fill="#cfe2f6" stroke="#3a5a78" />
    <path d="M2 9l2-3 2 2 3-3" stroke="#2a8a3a" fill="none" />
    <path d={PLUS} fill="#36c336" stroke="#1a7a1a" />
  </Ico>
);
const IcProfiles = () => (
  <Ico>
    <rect x="0.5" y="2.5" width="10" height="8" fill="#e6eef8" stroke="#4a6a90" />
    <rect x="4.5" y="6.5" width="12" height="9" fill="#d4e2f2" stroke="#4a6a90" />
    <path d="M6 9.5h9M6 12.5h9" stroke="#7a90aa" />
  </Ico>
);
const IcMarket = () => (
  <Ico>
    <rect x="2.5" y="1.5" width="13" height="15" fill="#f4f4f0" stroke="#555" />
    <path d="M7 3l3 3H8v3H6V6H4z" fill="#2aa04a" />
    <path d="M11 14l-3-3h2V8h2v3h2z" fill="#d8502c" />
  </Ico>
);
const IcNavigator = () => (
  <Ico>
    <circle cx="9" cy="9" r="5.5" fill="none" stroke="#777" strokeWidth="1.2" />
    <path d="M9 1v16M1 9h16" stroke="#777" />
  </Ico>
);
const IcFavorites = () => (
  <Ico>
    <path d="M1 4h5l1 2h7v8H1z" fill="#f2d890" stroke="#a88840" />
    <path d="M12 8l1.6 3.2 3.4.4-2.5 2.3.7 3.4-3.2-1.7-3 1.7.6-3.4L7 11.6l3.4-.4z" fill="#f2c230" stroke="#a87c10" strokeWidth="0.7" />
  </Ico>
);
const IcTerminal = () => (
  <Ico>
    <rect x="1.5" y="1.5" width="15" height="15" fill="#f2f4f8" stroke="#333" />
    <rect x="2" y="2" width="4" height="14" fill="#3a6a9a" />
    <path d="M8 5h7M8 8h7M8 11h7M8 14h7" stroke="#667" />
  </Ico>
);
const IcTester = () => (
  <Ico>
    <path d="M3 1.5h8l2 3v8H3z" fill="#dfe6ee" stroke="#7a8aa0" />
    <circle cx="8" cy="7" r="3.5" fill="#bcd0ea" stroke="#53709a" />
    <path d="M8 5v2l2 1" stroke="#2a3a5a" fill="none" />
    <path d="M12 12l4 4" stroke="#b88a30" strokeWidth="2" />
  </Ico>
);
const IcNewOrder = () => (
  <Ico>
    <path d="M2.5 1.5h7l2 2v9h-9z" fill="#eee" stroke="#a0a0a0" />
    <path d="M4 5h5M4 7.5h5M4 10h4" stroke="#b4b4b4" />
    <path d={PLUS} fill="#c6c4be" stroke="#9a9a96" />
  </Ico>
);
const IcEditor = () => (
  <Ico>
    <path d="M2 8l6-6 8 8-6 6z" fill="#e8b63a" stroke="#7a5a14" />
    <path d="M2 8l2 4 6 4" fill="#b8862a" stroke="#7a5a14" />
  </Ico>
);
const IcAuto = () => (
  <Ico w={20} h={20}>
    <ellipse cx="8" cy="5" rx="7" ry="3.5" fill="#4a9ad8" stroke="#2a5a88" />
    <path d="M1 5v9c0 2 3 3.5 7 3.5s7-1.5 7-3.5V5" fill="#e0a850" stroke="#7a6030" />
    <circle cx="14" cy="14" r="5" fill="#e8e8e8" stroke="#777" />
    <circle cx="14" cy="14" r="3" fill="#d02020" />
  </Ico>
);
const AXES = 'M3 1v13h13';
const IcBars = () => (
  <Ico>
    <path d={AXES} stroke="#333" fill="none" />
    <path d="M6 3v8M5 4h1M6 9h1M11 2v9M10 3h1M11 8h1" stroke="#1a8a3a" fill="none" />
  </Ico>
);
const IcCandles = () => (
  <Ico>
    <path d={AXES} stroke="#333" fill="none" />
    <path d="M10 1v11" stroke="#222" />
    <rect x="7.5" y="3.5" width="5" height="6" fill="#35c43a" stroke="#222" />
  </Ico>
);
const IcLine = () => (
  <Ico>
    <path d={AXES} stroke="#333" fill="none" />
    <path d="M4 11l4-7 3 5 4-3" stroke="#1a8a3a" fill="none" />
    <path d="M4 13l4-4 3 2 4-1" stroke="#c23020" fill="none" />
  </Ico>
);
const IcZoom = ({ minus }) => (
  <Ico>
    <circle cx="7" cy="7" r="5.5" fill="#bcdcf4" stroke="#4a7ab0" />
    <path d={minus ? 'M4 7h6' : 'M4 7h6M7 4v6'} stroke="#1a68c0" strokeWidth="1.6" />
    <path d="M11 11l5 5" stroke="#d8a838" strokeWidth="2.4" />
  </Ico>
);
const IcScroll = ({ red }) => (
  <Ico>
    <path d="M3 1v15M0 13h17" stroke="#333" fill="none" />
    <path d="M7 1v12" stroke="#555" />
    {red ? <path d="M14 6l-5 3 5 3z" fill="#c0382a" /> : <path d="M9 5l5 3-5 3z" fill="#32a83a" />}
  </Ico>
);
const IcIndicator = () => (
  <Ico>
    <path d="M2.5 1.5h7l2 2v9h-9z" fill="#f0f0ec" stroke="#555" />
    <path d="M4 5h5M4 7.5h5" stroke="#888" />
    <path d={PLUS} fill="#36c336" stroke="#1a7a1a" />
  </Ico>
);
const IcClock = () => (
  <Ico>
    <circle cx="9" cy="9" r="7.5" fill="#3f86c4" stroke="#1e4a7a" />
    <circle cx="9" cy="9" r="5" fill="#f2f6fa" />
    <path d="M9 5.5V9h3" stroke="#1e3a5a" fill="none" />
  </Ico>
);
const IcTemplate = () => (
  <Ico>
    <rect x="1.5" y="2.5" width="15" height="13" fill="#f2f4f2" stroke="#445" />
    <rect x="2" y="3" width="14" height="3" fill="#5a88b8" />
    <path d="M3 10l3-2 3 2 4-2 2 1M3 13l3-1 3 1 4-2" stroke="#2a8a4a" fill="none" />
  </Ico>
);
const IcCursor = () => (
  <Ico>
    <path d="M5 2v13l3-3 2.5 5 2-1-2.5-5h4z" fill="#2c2c2c" />
  </Ico>
);
const IcCross = () => (
  <Ico>
    <path d="M9 2v5M9 11v5M2 9h5M11 9h5" stroke="#666" />
  </Ico>
);
const IcVLine = () => <Ico><path d="M9 2v14" stroke="#666" /></Ico>;
const IcHLine = () => <Ico><path d="M1 9h15" stroke="#666" /></Ico>;
const IcTrend = () => <Ico><path d="M2 16L16 3" stroke="#666" /></Ico>;
const IcChannel = () => (
  <Ico>
    <path d="M2 12L12 3M4 15L14 6M2 8l9 8M5 4l9 9" stroke="#666" fill="none" />
    <text x="12" y="17" fontSize="6.5" fontFamily="Liberation Sans, sans-serif" fill="#555">E</text>
  </Ico>
);
const IcFibo = () => (
  <Ico>
    <path d="M1 3h12M1 6h12M1 9h12M1 12h12" stroke="#666" strokeDasharray="1 1" />
    <text x="11" y="17" fontSize="6.5" fontFamily="Liberation Sans, sans-serif" fill="#555">F</text>
  </Ico>
);
const IcText = () => (
  <Ico>
    <text x="3" y="14" fontSize="13" fontWeight="700" fontFamily="Liberation Sans, sans-serif" fill="#666">A</text>
  </Ico>
);
const IcLabel = () => (
  <Ico>
    <rect x="3.5" y="2.5" width="11" height="13" fill="none" stroke="#777" strokeDasharray="1 1" />
    <text x="5.5" y="13" fontSize="10.5" fontFamily="Liberation Sans, sans-serif" fill="#666">T</text>
  </Ico>
);
const IcMarks = () => (
  <Ico w={16}>
    <path d="M3 1l3 3-1 1H3v3H2V5H0z" fill="#333" />
    <path d="M6 7l3 3-3 3-3-3z" fill="#444" />
    <path d="M12 10l3 3-3 3-3-3z" fill="#444" />
  </Ico>
);
const IcGear = () => (
  <Ico w={14} h={16}>
    <circle cx="7" cy="8" r="5" fill="none" stroke="#2f62c8" strokeWidth="3" strokeDasharray="2 1" />
    <circle cx="7" cy="8" r="4" fill="none" stroke="#3b78e0" strokeWidth="2" />
    <circle cx="7" cy="8" r="1.5" fill="#dfe8f8" />
  </Ico>
);
const IcSearch = () => (
  <Ico w={14} h={18}>
    <circle cx="8.5" cy="6" r="4.5" fill="#e2e8f0" stroke="#5c7fb8" strokeWidth="1.4" />
    <path d="M5.5 10L2 16" stroke="#5c7fb8" strokeWidth="2" />
  </Ico>
);
const IcMessage = () => (
  <Ico w={18} h={18}>
    <path d="M1.5 1.5h15v12h-6l-2 3v-3h-7z" fill="#5a7cb0" stroke="#4a6a9c" />
    <text x="6" y="11.5" fontSize="10" fontWeight="700" fontFamily="Liberation Sans, sans-serif" fill="#e8ecf4">4</text>
  </Ico>
);
const IcApp = () => (
  <Ico w={16} h={16}>
    <circle cx="8" cy="8" r="6" fill="#b01a22" />
    <path d="M8 0v16M0 8h16M2 2l12 12M14 2L2 14" stroke="#c8222a" strokeWidth="1.6" />
    <circle cx="8" cy="8" r="2" fill="#3a0a14" />
  </Ico>
);
const IcDoc = () => (
  <Ico w={16} h={16}>
    <rect x="1.5" y="1.5" width="11" height="10" fill="#dce6f0" stroke="#5a7a9c" />
    <rect x="5.5" y="6.5" width="10" height="8" fill="#f2f4f6" stroke="#5a7a9c" />
    <path d="M7 12l2-3 2 2 3-2" stroke="#2a8a3a" fill="none" />
  </Ico>
);
const IcOrder = () => (
  <Ico w={17} h={17}>
    <path d="M2.5 1.5h7l3 3v10h-10z" fill="#fff" stroke="#444" />
    <path d="M9.5 1.5v3h3" fill="none" stroke="#444" />
    <circle cx="11" cy="13" r="3.5" fill="#d0512a" stroke="#8a2a10" />
  </Ico>
);
const IcArrow = ({ down, sel }) =>
  down ? (
    <Ico w={12} h={12}>
      <path d="M4 1h4v5h3.5L6 11.5.5 6H4z" fill="#de6a34" stroke="#a84618" strokeWidth="0.6" />
    </Ico>
  ) : (
    <Ico w={12} h={12}>
      <path d="M4 11h4V6h3.5L6 .5.5 6H4z" fill={sel ? '#2bb04a' : '#2eae4c'} stroke={sel ? '#0c2a70' : '#127a2c'} strokeWidth="0.6" />
    </Ico>
  );

const ToolGrip = () => <Gripper />;

const Underlined = ({ first, rest }) => (
  <MenuItem>
    <u>{first}</u>
    {rest}
  </MenuItem>
);

const App = () => (
  <Page>
    <GlobalStyle />
    <Scribble />
    <TitleBar>
      <IcApp />
      <TitleText>InstaTrader - [EURJPY,H1]</TitleText>
      <CaptionGroup>
        <CaptionBtn>_</CaptionBtn>
        <CaptionBtn $w={15}>□</CaptionBtn>
        <CaptionBtn $w={18}>X</CaptionBtn>
      </CaptionGroup>
    </TitleBar>

    <MenuBar>
      <IcDoc />
      <Underlined first="F" rest="ile" />
      <Underlined first="V" rest="iew" />
      <Underlined first="I" rest="nsert" />
      <Underlined first="C" rest="harts" />
      <Underlined first="T" rest="ools" />
      <Underlined first="W" rest="indow" />
      <Underlined first="H" rest="elp" />
      <CaptionGroup>
        <CaptionBtn>_</CaptionBtn>
        <CaptionBtn $w={15}>❐</CaptionBtn>
        <CaptionBtn $w={18}>X</CaptionBtn>
      </CaptionGroup>
    </MenuBar>

    <ToolbarRow $h={28}>
      <ToolGroup $white>
        <ToolGrip />
        <ToolBtn $w={35}><IcNewChart /><Caret /></ToolBtn>
        <ToolBtn $w={35}><IcProfiles /><Caret /></ToolBtn>
        <ToolSep />
        <ToolBtn $w={25} $on><IcMarket /></ToolBtn>
        <ToolBtn $w={29}><IcNavigator /></ToolBtn>
        <ToolBtn $w={28}><IcFavorites /></ToolBtn>
        <ToolBtn $w={25} $on><IcTerminal /></ToolBtn>
        <ToolBtn $w={28}><IcTester /></ToolBtn>
        <ToolSep />
        <ToolBtn $w={81}><IcNewOrder /><ToolLabel $off>New Order</ToolLabel></ToolBtn>
        <ToolBtn $w={28}><IcEditor /></ToolBtn>
        <ToolBtn $w={91} $gap={5}><IcAuto /><ToolLabel>AutoTrading</ToolLabel></ToolBtn>
      </ToolGroup>
      <ToolGroup $white>
        <ToolGrip />
        <ToolBtn $w={29}><IcBars /></ToolBtn>
        <ToolBtn $w={29}><IcCandles /></ToolBtn>
        <ToolBtn $w={25} $on><IcLine /></ToolBtn>
        <ToolSep />
        <ToolBtn $w={28}><IcZoom /></ToolBtn>
        <ToolBtn $w={28}><IcZoom minus /></ToolBtn>
        <ToolSep />
        <ToolBtn $w={25} $on><IcScroll /></ToolBtn>
        <ToolBtn $w={25} $on><IcScroll red /></ToolBtn>
        <ToolSep />
        <ToolBtn $w={28}><IcIndicator /><Caret /></ToolBtn>
        <ToolBtn $w={35}><IcClock /><Caret /></ToolBtn>
        <ToolBtn $w={34}><IcTemplate /><Caret /></ToolBtn>
      </ToolGroup>
      <SearchArea>
        <SearchGear><IcGear /></SearchGear>
        <SearchInput />
        <SearchDrop><Caret /></SearchDrop>
        <SearchBtn><IcSearch /></SearchBtn>
        <SearchBtn $msg><IcMessage /></SearchBtn>
      </SearchArea>
    </ToolbarRow>

    <ToolbarRow $h={26}>
      <ToolGroup $white>
        <ToolGrip />
        <ToolBtn $w={25} $on><IcCursor /></ToolBtn>
        <ToolBtn $w={29}><IcCross /></ToolBtn>
        <ToolSep $m={2} />
        <ToolBtn $w={28}><IcVLine /></ToolBtn>
        <ToolBtn $w={28}><IcHLine /></ToolBtn>
        <ToolBtn $w={28}><IcTrend /></ToolBtn>
        <ToolBtn $w={28}><IcChannel /></ToolBtn>
        <ToolBtn $w={28}><IcFibo /></ToolBtn>
        <ToolBtn $w={28}><IcText /></ToolBtn>
        <ToolBtn $w={28}><IcLabel /></ToolBtn>
        <ToolBtn $w={34} $gap={1}><IcMarks /><Caret /></ToolBtn>
      </ToolGroup>
      <ToolGroup $white>
        <ToolGrip />
        {['M1', 'M5', 'M15', 'M30'].map((p) => <PeriodBtn key={p}>{p}</PeriodBtn>)}
        <PeriodBtn $on>H1</PeriodBtn>
        {['H4', 'D1', 'W1', 'MN'].map((p) => <PeriodBtn key={p}>{p}</PeriodBtn>)}
      </ToolGroup>
    </ToolbarRow>

    <MainRow>
      <MarketWatch>
        <DockHead>
          <DockTitle>Market Watch: 17:47:11</DockTitle>
          <CloseMark>×</CloseMark>
        </DockHead>
        <WatchBody>
          <WatchTable>
            <WatchHead>
              <HeadCell>Symbol</HeadCell>
              <HeadCell $right>Bid</HeadCell>
              <HeadCell $right>Ask</HeadCell>
            </WatchHead>
            {WATCH.map(([sym, bid, ask, down, bg, sel]) => (
              <WatchRow key={sym} $bg={bg} $sel={sel}>
                <SymbolCell><IcArrow down={down} sel={sel} />{sym}</SymbolCell>
                <QuoteCell $pad={2} $down={down} $sel={sel}>{bid}</QuoteCell>
                <QuoteCell $pad={4} $down={down} $sel={sel}>{ask}</QuoteCell>
              </WatchRow>
            ))}
          </WatchTable>
          <ScrollTrack>
            <ScrollBtn><TriUp /></ScrollBtn>
            <Thumb $h={119} />
            <Thumb $h={0} $push />
            <ScrollBtn $h={14}><TriDown /></ScrollBtn>
          </ScrollTrack>
        </WatchBody>
        <TabStrip>
          <Tab $active $px={9}>Symbols</Tab>
          <Tab $thin $px={9}>Tick Chart</Tab>
        </TabStrip>
      </MarketWatch>

      <ChartColumn>
        <ChartWindow>
          <Pane $h={228}>
            <MainChart />
            <InfoPanel>
              <SignalGrid>
                <span />
                {['M1', 'M5', 'M15', 'M30', 'H1', 'H4'].map((p) => <span key={p}>{p}</span>)}
                <SignalName>MACD</SignalName>
                {['#3f8be6', '#e41414', '#3f8be6', '#3f8be6', '#3f8be6', '#3f8be6'].map((c, i) => <SignalCell key={i} $c={c} />)}
                <SignalName>STR</SignalName>
                {['#808080', '#e41414', '#3f8be6', '#3f8be6', '#3f8be6', '#3f8be6'].map((c, i) => <SignalCell key={i} $c={c} />)}
                <SignalName>EMA</SignalName>
                {['#3f8be6', '#e41414', '#3f8be6', '#3f8be6', '#3f8be6', '#3f8be6'].map((c, i) => <SignalCell key={i} $c={c} />)}
              </SignalGrid>
              <BigPrice>139.74</BigPrice>
              <Stats>
                <StatLabel $c="#7c8a60">Spread</StatLabel><StatValue $c="#c8d468">3</StatValue>
                <StatLabel>Pips to Open</StatLabel><StatValue $c="#e8664a">-14</StatValue>
                <StatLabel>High to Low</StatLabel><StatValue $c="#cfe4f2">58</StatValue>
                <StatLabel $c="#7c8a60">Daily Avg</StatLabel><StatValue $c="#c8dcae">85</StatValue>
                <StatLabel>Bar Closes In</StatLabel><StatValue $c="#2fd6d6">12:59</StatValue>
              </Stats>
            </InfoPanel>
          </Pane>
          <Pane $h={42}>
            <SubChart
              height={42}
              top={323}
              titleWidth={429}
              high={335}
              low={362}
              title="CURRENT TREND INDEX [Period_H1] CTI 139.6644 139.7650 139.8644 139.6044 139.6044 139.8644"
            >
              {CTI_H1.map(([t, b, c], i) => (
                <rect key={i} x={cx(i) - 3} y={subY(t)} width="6.5" height={(b - t) / 3} fill={HIST[c]} />
              ))}
            </SubChart>
          </Pane>
          <Pane $h={39}>
            <SubChart
              height={39}
              top={365}
              titleWidth={429}
              high={377}
              low={400}
              title="CURRENT TREND INDEX [Period_H4] CTI 139.6239 139.7175 139.5700 139.8409 139.5700"
            >
              {CTI_H4.flatMap(([from, to, t, b, c]) =>
                Array.from({ length: to - from + 1 }, (_, k) => (
                  <rect key={from + k} x={cx(from + k) - 3.5} y={subY(t)} width="7.4" height={(b - t) / 3} fill={HIST[c]} />
                ))
              )}
            </SubChart>
          </Pane>
          <TimeAxis>
            {TIMES.map((t) => <TimeLabel key={t}>{t}</TimeLabel>)}
          </TimeAxis>
        </ChartWindow>
        <ChartTabs>
          <TabStrip $h={20} $pad={3}>
            <Tab $plain $px={13}>EURJPY,H1</Tab>
            <Tab $active $px={10}>EURJPY,H1</Tab>
            <Tab $thin $px={11}>AUDUSD,H1</Tab>
            <Tab $thin $px={11}>AUDUSD,H1</Tab>
          </TabStrip>
          <TabArrows><TinyTri $left /><TinyTri /></TabArrows>
        </ChartTabs>
      </ChartColumn>
    </MainRow>

    <Terminal>
      <TerminalSide>
        <SideClose>×</SideClose>
        <SideBar><SideLabel>Terminal</SideLabel></SideBar>
      </TerminalSide>
      <TerminalMain>
        <TradeArea>
          <TradeTable>
            <TradeHead>
              <TradeHeadCell $sort>Order<SortMark /></TradeHeadCell>
              {['Time', 'Type', 'Size', 'Symbol', 'Price', 'S / L', 'T / P', 'Time', 'Price', 'Swap', 'Profit'].map((h, i) => (
                <TradeHeadCell key={i} $right>{h}</TradeHeadCell>
              ))}
            </TradeHead>
            {TRADES.map(([id, open, size, price, tp, close, profit], i) => (
              <TradeRow key={id} $odd={i % 2 === 0}>
                <OrderCell><IcOrder />{id}</OrderCell>
                <TradeCell>{open}</TradeCell>
                <TradeCell>sell</TradeCell>
                <TradeCell>{size}</TradeCell>
                <TradeCell>eurjpy</TradeCell>
                <TradeCell>{price}</TradeCell>
                <TradeCell>0.00</TradeCell>
                <TradeCell $tp>{tp}</TradeCell>
                <TradeCell>{close}</TradeCell>
                <TradeCell>{tp}</TradeCell>
                <TradeCell>0.00</TradeCell>
                <TradeCell>{profit}</TradeCell>
              </TradeRow>
            ))}
            <TotalRow>
              <TotalDot />
              <TotalPart>Profit/Loss: 350.12</TotalPart>
              <TotalPart>Credit: 0.00</TotalPart>
              <TotalPart>Deposit: 1 000.00</TotalPart>
              <TotalPart>Withdrawal: 0.00</TotalPart>
              <TotalSum>1 350.12</TotalSum>
            </TotalRow>
          </TradeTable>
          <ScrollTrack>
            <Thumb $h={12} $push />
            <ScrollBtn $h={14}><TriDown /></ScrollBtn>
          </ScrollTrack>
        </TradeArea>
        <TabStrip $h={18} $pad={1}>
          <Tab $plain $px={11}>Trade</Tab>
          <Tab $active $px={9}>Account History</Tab>
          <Tab $thin $px={10}>News</Tab>
          <Tab $thin $px={10}>Alerts</Tab>
          <Tab $thin $px={9}>Mailbox</Tab>
          <Tab $thin $px={8}>Market</Tab>
          <Tab $thin $px={10}>Signals<TabBadge>23</TabBadge></Tab>
          <Tab $thin $px={10}>Code Base</Tab>
          <Tab $thin $px={11}>Experts</Tab>
          <Tab $thin $px={9}>Journal</Tab>
        </TabStrip>
      </TerminalMain>
    </Terminal>

    <StatusBar>
      <StatusCell $w={646} $hint>For Help, press F1</StatusCell>
      <StatusCell $w={110}>Default</StatusCell>
      <StatusCell $w={100}>2014.06.03 21:00</StatusCell>
      <StatusCell $w={72}>O: 139.73</StatusCell>
      <StatusCell $w={70}>H: 139.75</StatusCell>
      <StatusCell $w={70}>L: 139.61</StatusCell>
      <StatusCell $w={70}>C: 139.62</StatusCell>
      <StatusCell $w={66}>V: 146</StatusCell>
      <StatusCell $w={130} $last>
        <ConnBars width="24" height="14" viewBox="0 0 24 14">
          {Array.from({ length: 12 }, (_, i) => (
            <rect key={i} x={i * 2} y="1" width="1.4" height="12" fill={i < 6 ? '#8a8a1a' : '#1a5a7a'} />
          ))}
        </ConnBars>
        <TrafficLabel>1582/2 kb</TrafficLabel>
      </StatusCell>
      <Grip width="13" height="13" viewBox="0 0 13 13">
        <path d="M12 1L1 12M12 5L5 12M12 9L9 12" stroke="#8f8c85" />
      </Grip>
    </StatusBar>

    <Watermark><WatermarkWord>EABAGUS</WatermarkWord> / VERO EA 2014</Watermark>
  </Page>
);

export default App;
